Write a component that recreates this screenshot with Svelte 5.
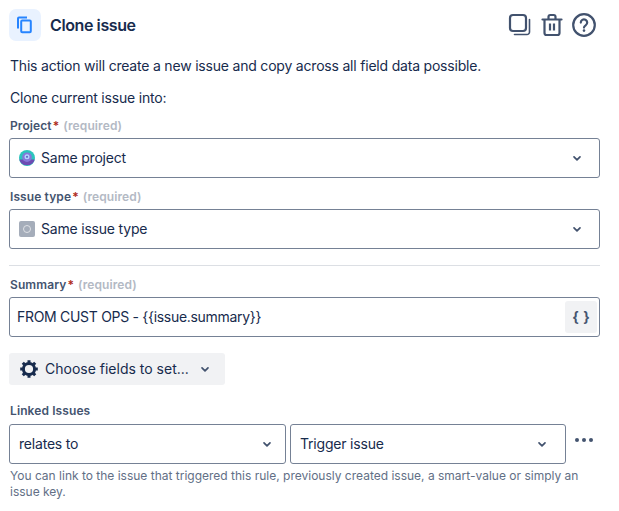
<script>
    const helpText = "You can link to the issue that triggered this rule, previously created issue, a smart-value or simply an issue key.";
</script>

{#snippet chevron()}
    <svg class="chevron" width="16" height="16" viewBox="0 0 16 16" fill="none">
        <path d="M5 6.800 8 9.800 11 6.800" stroke="#42526e" stroke-width="1.700" stroke-linecap="round" stroke-linejoin="round" />
    </svg>
{/snippet}

<div class="panel">
    <header class="head">
        <div class="head-icon">
            <svg width="18" height="18" viewBox="0 0 18 18" fill="none" stroke="#2684ff" stroke-width="2">
                <path d="M2 12.500V2.600C2 2 2.400 1.600 3 1.600h8" />
                <rect x="5.200" y="4.600" width="9.600" height="11.600" rx="1" />
            </svg>
        </div>
        <h1>Clone issue</h1>
        <div class="actions">
            <svg width="24" height="24" viewBox="0 0 24 24" fill="none" stroke="#42526e">
                <rect x="2" y="2" width="16" height="16" rx="3" stroke-width="2.200" />
                <path d="M21.500 6.500V19a2.500 2.500 0 0 1-2.500 2.500H6.500" stroke-width="1.600" stroke-linecap="round" />
            </svg>
            <svg width="24" height="24" viewBox="0 0 24 24" fill="none" stroke="#42526e" stroke-width="2.200">
                <path d="M2.500 6.500h19" stroke-linecap="round" />
                <path d="M8.500 6V3.800C8.500 2.800 9.300 2 10.300 2h3.400c1 0 1.800.8 1.800 1.800V6" />
                <path d="M4.500 7v13c0 1.200.9 2 2 2h11c1.100 0 2-.8 2-2V7" />
                <path d="M10 10.500v7M14 10.500v7" />
            </svg>
            <svg width="24" height="24" viewBox="0 0 24 24" fill="none" stroke="#42526e" stroke-width="2.200">
                <circle cx="12" cy="12" r="10.800" />
                <path d="M8.800 9.600a3.200 3.200 0 1 1 5 2.600c-1 .7-1.800 1.200-1.800 2.400" stroke-linecap="round" />
                <circle cx="12" cy="17.600" r="1.300" fill="#42526e" stroke="none" />
            </svg>
        </div>
    </header>

    <p class="intro">This action will create a new issue and copy across all field data possible.</p>
    <p class="sub">Clone current issue into:</p>

    <div class="label">Project<span class="star">*</span><span class="req">(required)</span></div>
    <div class="field">
        <svg class="item-icon" width="16" height="16" viewBox="0 0 16 16">
            <circle cx="8" cy="8" r="8" fill="#2cc5bd" />
            <path d="M0.300 9.500h15.400A8 8 0 0 1 .3 9.500z" fill="#6d4bb3" />
            <circle cx="8" cy="7.200" r="4.800" fill="#8777d9" />
            <circle cx="8" cy="6.800" r="2.500" fill="#b3d4ff" />
            <circle cx="8" cy="6.800" r="1.100" fill="#5e6cc4" />
        </svg>
        <span class="value">Same project</span>
        {@render chevron()}
    </div>

    <div class="label second">Issue type<span class="star">*</span><span class="req">(required)</span></div>
    <div class="field">
        <span class="type-icon"><span class="type-dot"></span></span>
        <span class="value">Same issue type</span>
        {@render chevron()}
    </div>

    <hr />

    <div class="label after-rule">Summary<span class="star">*</span><span class="req">(required)</span></div>
    <div class="field summary">
        <span class="value">FROM CUST OPS - {"{{"}issue.summary{"}}"}</span>
        <span class="smart">{"{ }"}</span>
    </div>

    <button class="choose">
        <svg width="20" height="20" viewBox="0 0 20 20" fill="none">
            <circle cx="10" cy="10" r="5.600" stroke="#172b4d" stroke-width="3" />
            <g stroke="#172b4d" stroke-width="3">
                <path d="M10 1.200v3M10 15.800v3M1.200 10h3M15.800 10h3M3.800 3.800l2.100 2.100M14.100 14.100l2.100 2.100M3.800 16.200l2.100-2.100M14.100 5.900l2.100-2.100" />
            </g>
        </svg>
        <span>Choose fields to set...</span>
        {@render chevron()}
    </button>

    <div class="label linked">Linked Issues</div>
    <div class="row">
        <div class="field half">
            <span class="value">relates to</span>
            {@render chevron()}
        </div>
        <div class="field half">
            <span class="value">Trigger issue</span>
            {@render chevron()}
        </div>
        <div class="dots"><i></i><i></i><i></i></div>
    </div>
    <p class="help">{helpText}</p>
</div>

<style>
    :global(body) {
        background: #fff;
    }

    .panel {
        width: 591px;
        height: 511px;
        padding: 9px 19px 0 9px;
        overflow: hidden;
        font-family: Inter, "Noto Sans", sans-serif;
        font-size: 14px;
        letter-spacing: -0.2px;
        color: #172b4d;
    }

    .head {
        display: flex;
        align-items: center;
        height: 32px;
    }

    .head-icon {
        width: 32px;
        height: 32px;
        border-radius: 7px;
        background: #e9f2ff;
        display: flex;
        align-items: center;
        justify-content: center;
    }

    h1 {
        margin: 0 0 0 9px;
        font-size: 16px;
        line-height: 20px;
        font-weight: 600;
        letter-spacing: -0.4px;
        flex: 1;
    }

    .actions {
        display: flex;
        align-items: center;
        gap: 8px;
        margin-right: 4px;
    }

    .intro, .sub {
        margin: 0 0 0 1px;
        line-height: 20px;
    }

    .intro {
        margin-top: 15px;
    }

    .sub {
        margin-top: 12px;
    }

    .label {
        margin: 10px 0 4px 1px;
        font-size: 12px;
        line-height: 16px;
        font-weight: 600;
        letter-spacing: 0.1px;
        color: #44546f;
    }

    .label.second, .label.after-rule {
        margin-top: 11px;
    }

    .star {
        color: #ae2a19;
        margin-left: 1px;
    }

    .req {
        color: #b3b9c4;
        margin-left: 4px;
    }

    .field {
        height: 40px;
        box-sizing: border-box;
        border: 1px solid #758195;
        border-radius: 3px;
        display: flex;
        align-items: center;
        padding: 0 14px 0 8px;
        line-height: 20px;
    }

    .value {
        flex: 1;
        white-space: nowrap;
    }

    .item-icon {
        margin-right: 6px;
        margin-left: 1px;
    }

    .type-icon {
        width: 16px;
        height: 16px;
        margin-right: 6px;
        margin-left: 1px;
        border-radius: 2px;
        background: #a5adba;
        display: flex;
        align-items: center;
        justify-content: center;
    }

    .type-dot {
        width: 8px;
        height: 8px;
        box-sizing: border-box;
        border: 1.500px solid #dfe1e6;
        border-radius: 50%;
    }

    hr {
        border: 0;
        height: 1px;
        background: #dcdfe4;
        margin: 16px 0 0;
    }

    .summary {
        padding: 0 2px 0 7px;
        letter-spacing: -0.3px;
    }

    .smart {
        width: 32px;
        height: 32px;
        border-radius: 3px;
        background: #f1f2f4;
        display: flex;
        align-items: center;
        justify-content: center;
        font-weight: 700;
        color: #44546f;
        font-size: 14px;
        letter-spacing: 0;
        word-spacing: 1px;
    }

    .choose {
        display: flex;
        align-items: center;
        width: 216px;
        height: 32px;
        margin-top: 16px;
        padding: 0 0 0 10px;
        border: 0;
        border-radius: 3px;
        background: #f1f2f4;
        font: inherit;
        letter-spacing: 0;
        color: #172b4d;
        line-height: 20px;
    }

    .choose span {
        margin-left: 6px;
        font-weight: 400;
    }

    .choose .chevron {
        margin-left: 8px;
    }

    .label.linked {
        margin-top: 18px;
        margin-bottom: 5px;
    }

    .row {
        display: flex;
        align-items: flex-start;
        gap: 4px;
    }

    .half {
        width: 277px;
        flex: none;
        padding-left: 9px;
        padding-right: 10px;
    }

    .half + .half {
        width: 276px;
        padding-right: 15px;
    }

    .dots {
        display: flex;
        gap: 3px;
        margin: 14px 0 0 5px;
    }

    .dots i {
        width: 4px;
        height: 4px;
        border-radius: 50%;
        background: #44546f;
    }

    .help {
        margin: 4px 0 0 1px;
        font-size: 12px;
        line-height: 16px;
        letter-spacing: 0;
        color: #626f86;
        width: 575px;
    }
</style>
